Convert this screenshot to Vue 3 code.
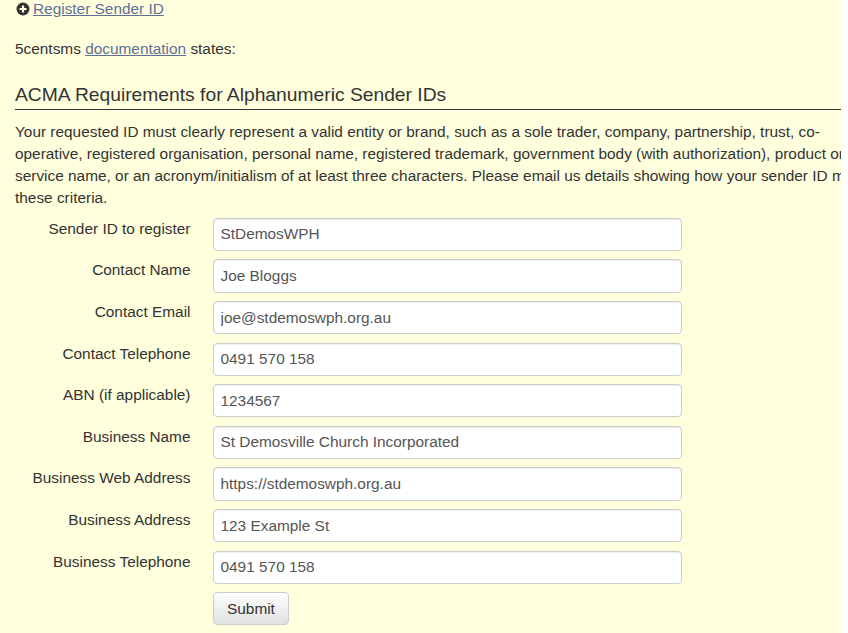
<script setup>
const fields = [
  ['Sender ID to register', 'StDemosWPH'],
  ['Contact Name', 'Joe Bloggs'],
  ['Contact Email', 'joe@stdemoswph.org.au'],
  ['Contact Telephone', '0491 570 158'],
  ['ABN (if applicable)', '1234567'],
  ['Business Name', 'St Demosville Church Incorporated'],
  ['Business Web Address', 'https://stdemoswph.org.au'],
  ['Business Address', '123 Example St'],
  ['Business Telephone', '0491 570 158'],
]
</script>

<template>
  <div class="clip">
    <div class="content">
      <div class="register">
        <svg class="plus" viewBox="0 0 14 14" width="14" height="14">
          <circle cx="7" cy="7" r="6.5" fill="#333" />
          <path d="M3.5 7h7M7 3.5v7" stroke="#ffffdd" stroke-width="2.2" fill="none" />
        </svg>
        <a href="#">Register Sender ID</a>
      </div>
      <p class="states">5centsms <a href="#">documentation</a> states:</p>
      <h3>ACMA Requirements for Alphanumeric Sender IDs</h3>
      <p class="req">Your requested ID must clearly represent a valid entity or brand, such as a sole trader, company, partnership, trust, co-operative, registered organisation, personal name, registered trademark, government body (with authorization), product or service name, or an acronym/initialism of at least three characters. Please email us details showing how your sender ID meets these criteria.</p>
      <form class="form" @submit.prevent>
        <div v-for="f in fields" :key="f[0]" class="row">
          <label>{{ f[0] }}</label>
          <input type="text" :value="f[1]" />
        </div>
        <div class="row">
          <span></span>
          <button type="submit">Submit</button>
        </div>
      </form>
    </div>
  </div>
</template>

<style>
html, body { background: #fff; }
</style>

<style scoped>
.clip {
  width: 841px;
  height: 633px;
  overflow: hidden;
  background: #ffffdd;
  font-family: "Liberation Sans", Arial, sans-serif;
  font-size: 15.4px;
  line-height: 22px;
  color: #333;
}
.content {
  width: 866px;
  padding-left: 15px;
}
a {
  color: #5f6f9b;
  text-decoration: underline;
}
.register {
  display: flex;
  align-items: center;
  gap: 3px;
  height: 17px;
}
.plus { flex: none; margin-left: 1px; }
.states {
  margin: 21px 0 0;
}
h3 {
  margin: 21px 0 0;
  font-size: 19.25px;
  line-height: 28px;
  font-weight: 400;
  border-bottom: 1px solid #333;
}
.req {
  margin: 11px 0 0;
}
.form {
  margin-top: 8.9px;
}
.row {
  display: grid;
  grid-template-columns: 175.5px 469px;
  column-gap: 22.5px;
  margin-bottom: 8.4px;
}
label {
  text-align: right;
}
input {
  box-sizing: border-box;
  width: 469px;
  height: 33.2px;
  padding: 6px 6.5px;
  border: 1px solid #ccc;
  border-radius: 4px;
  background: #fff;
  color: #555;
  font: inherit;
  box-shadow: inset 0 1px 1px rgba(0,0,0,.075);
}
button {
  justify-self: start;
  height: 33.4px;
  padding: 0 13px;
  border: 1px solid #ccc;
  border-radius: 4px;
  background: linear-gradient(#fff, #e0e0e0);
  color: #333;
  font: inherit;
}
</style>
